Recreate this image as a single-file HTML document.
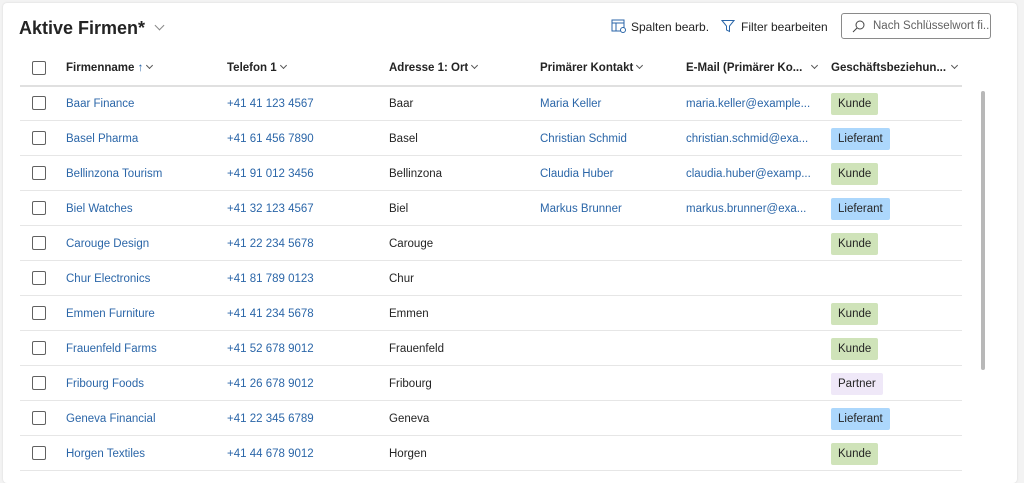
<!DOCTYPE html>
<html><head><meta charset="utf-8"><style>
*{margin:0;padding:0;box-sizing:border-box}
body{width:1024px;height:474px;background:#f3f3f3;font-family:"Liberation Sans",sans-serif;position:relative;overflow:hidden;color:#242424}
.card{position:absolute;left:3px;top:3px;width:1014px;height:480px;background:#fff;border-radius:4px;box-shadow:0 0 2px rgba(0,0,0,.12)}
.a{position:absolute;white-space:nowrap}
.title{left:19px;top:18px;font-size:18px;font-weight:bold;color:#242424}
.tb{font-size:12px;color:#242424;top:20px}
.search{left:841px;top:13px;width:150px;height:26px;border:1px solid #8a8a8a;border-radius:3px;font-size:11.5px;color:#616161;overflow:hidden}
.hd{font-size:11.5px;font-weight:bold;top:62px}
.cb{position:absolute;left:32px;width:14px;height:14px;border:1px solid #616161;border-radius:2px}
.line{position:absolute;left:20px;width:942px;height:1px;background:#e6e6e6}
.c{position:absolute;font-size:11.5px;white-space:nowrap}
.lk{color:#2b66a8}
.badge{position:absolute;left:831px;height:22px;padding:0 7px;line-height:22px;font-size:11.5px;border-radius:2px;color:#242424}
.k{background:#cfe3b9}.l{background:#acd7fc}.p{background:#efe8f8}
.chev{display:inline-block;width:5px;height:5px;border-right:1px solid #555;border-bottom:1px solid #555;transform:rotate(45deg);margin-left:4px;vertical-align:3px}
</style></head><body>
<div class="card"></div>
<div class="a title">Aktive Firmen* <span class="chev" style="width:7px;height:7px;border-color:#888;margin-left:6px;vertical-align:5px"></span></div>
<svg class="a" style="left:611px;top:19px" width="16" height="14" viewBox="0 0 16 14"><rect x="1" y="1" width="12" height="11" fill="none" stroke="#2b66a8"/><line x1="1" y1="4" x2="13" y2="4" stroke="#2b66a8"/><line x1="5" y1="4" x2="5" y2="12" stroke="#2b66a8"/><circle cx="12" cy="11" r="2.5" fill="#fff" stroke="#2b66a8"/></svg>
<div class="a tb" style="left:631px">Spalten bearb.</div>
<svg class="a" style="left:721px;top:19px" width="14" height="14" viewBox="0 0 14 14"><path d="M1 1.5h12l-4.5 5.5v5.5l-3-1.5v-4z" fill="none" stroke="#2b66a8"/></svg>
<div class="a tb" style="left:741px">Filter bearbeiten</div>
<div class="a search"><svg style="position:absolute;left:10px;top:6px" width="13" height="13" viewBox="0 0 13 13"><circle cx="8" cy="5" r="4" fill="none" stroke="#444"/><line x1="5" y1="8" x2="1" y2="12" stroke="#444"/></svg><span style="position:absolute;left:31px;top:6px">Nach Schlüsselwort fi...</span></div>
<div class="cb" style="top:61px"></div>
<div class="a hd" style="left:66px">Firmenname <span style="color:#2b66a8;font-weight:normal">↑</span><span class="chev"></span></div>
<div class="a hd" style="left:227px">Telefon 1<span class="chev"></span></div>
<div class="a hd" style="left:389px">Adresse 1: Ort<span class="chev"></span></div>
<div class="a hd" style="left:540px">Primärer Kontakt<span class="chev"></span></div>
<div class="a hd" style="left:686px">E-Mail (Primärer Ko... <span class="chev" style="margin-left:6px"></span></div>
<div class="a hd" style="left:831px">Geschäftsbeziehun... <span class="chev" style="margin-left:3px"></span></div>
<div class="line" style="top:85px;height:2px;background:#e0e0e0"></div>
<div style="position:absolute;left:981px;top:91px;width:4px;height:279px;background:#b8b8b8;border-radius:2px"></div>
<div id="rows"></div>
<script>
var d=[["Baar Finance","+41 41 123 4567","Baar","Maria Keller","maria.keller@example...","k"],
["Basel Pharma","+41 61 456 7890","Basel","Christian Schmid","christian.schmid@exa...","l"],
["Bellinzona Tourism","+41 91 012 3456","Bellinzona","Claudia Huber","claudia.huber@examp...","k"],
["Biel Watches","+41 32 123 4567","Biel","Markus Brunner","markus.brunner@exa...","l"],
["Carouge Design","+41 22 234 5678","Carouge","","","k"],
["Chur Electronics","+41 81 789 0123","Chur","","",""],
["Emmen Furniture","+41 41 234 5678","Emmen","","","k"],
["Frauenfeld Farms","+41 52 678 9012","Frauenfeld","","","k"],
["Fribourg Foods","+41 26 678 9012","Fribourg","","","p"],
["Geneva Financial","+41 22 345 6789","Geneva","","","l"],
["Horgen Textiles","+41 44 678 9012","Horgen","","","k"]];
var n={k:"Kunde",l:"Lieferant",p:"Partner"},h="";
d.forEach(function(r,i){var c=103+35*i,t=c-5;
h+='<div class="cb" style="top:'+(c-7)+'px"></div>';
h+='<div class="c lk" style="left:66px;top:'+t+'px">'+r[0]+'</div>';
h+='<div class="c lk" style="left:227px;top:'+t+'px">'+r[1]+'</div>';
h+='<div class="c" style="left:389px;top:'+t+'px">'+r[2]+'</div>';
h+='<div class="c lk" style="left:540px;top:'+t+'px">'+r[3]+'</div>';
h+='<div class="c lk" style="left:686px;top:'+t+'px">'+r[4]+'</div>';
if(r[5])h+='<div class="badge '+r[5]+'" style="top:'+(c-10)+'px">'+n[r[5]]+'</div>';
h+='<div class="line" style="top:'+(c+17)+'px"></div>';});
document.getElementById("rows").innerHTML=h;
</script>
</body></html>
